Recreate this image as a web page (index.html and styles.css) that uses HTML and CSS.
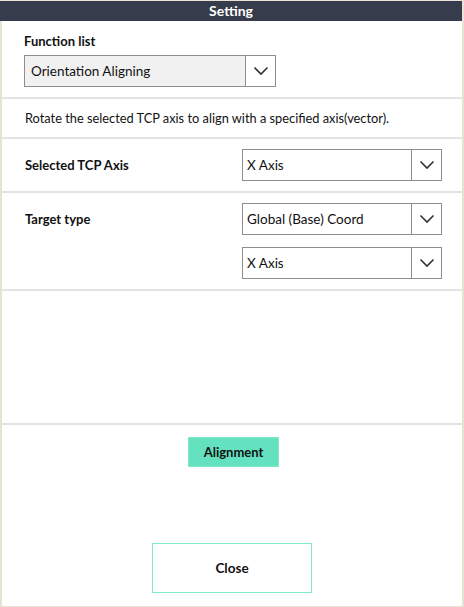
FILE: index.html
```html
<!DOCTYPE html>
<html>
<head>
<meta charset="utf-8">
<link rel="stylesheet" href="styles.css">
</head>
<body>
<div class="panel">
  <div class="header">Setting</div>
  <div class="section s-func">
    <div class="label">Function list</div>
    <div class="select select-gray">
      <span class="select-text">Orientation Aligning</span>
      <span class="select-btn"><svg width="16" height="10" viewBox="0 0 16 10"><polyline points="1.5,1.5 8,8 14.5,1.5" fill="none" stroke="#333" stroke-width="1.6"/></svg></span>
    </div>
  </div>
  <div class="section s-desc">Rotate the selected TCP axis to align with a specified axis(vector).</div>
  <div class="section s-row">
    <div class="label row-label">Selected TCP Axis</div>
    <div class="select select-right">
      <span class="select-text">X Axis</span>
      <span class="select-btn"><svg width="16" height="10" viewBox="0 0 16 10"><polyline points="1.5,1.5 8,8 14.5,1.5" fill="none" stroke="#333" stroke-width="1.6"/></svg></span>
    </div>
  </div>
  <div class="section s-row">
    <div class="label row-label">Target type</div>
    <div class="select-stack">
      <div class="select select-right">
        <span class="select-text">Global (Base) Coord</span>
        <span class="select-btn"><svg width="16" height="10" viewBox="0 0 16 10"><polyline points="1.5,1.5 8,8 14.5,1.5" fill="none" stroke="#333" stroke-width="1.6"/></svg></span>
      </div>
      <div class="select select-right">
        <span class="select-text">X Axis</span>
        <span class="select-btn"><svg width="16" height="10" viewBox="0 0 16 10"><polyline points="1.5,1.5 8,8 14.5,1.5" fill="none" stroke="#333" stroke-width="1.6"/></svg></span>
      </div>
    </div>
  </div>
  <div class="section s-empty"></div>
  <div class="footer">
    <button class="btn-align">Alignment</button>
    <button class="btn-close">Close</button>
  </div>
</div>
</body>
</html>
```
FILE: styles.css
```css
html, body {
  margin: 0;
  padding: 0;
  background: #e7e2d5;
}
body {
  font-family: Lato, "Open Sans", "Liberation Sans", sans-serif;
  color: #111;
  width: 464px;
  height: 607px;
  overflow: hidden;
}
.panel {
  margin: 1px 2px 0 2px;
  background: #fff;
  height: 605px;
  display: flex;
  flex-direction: column;
}
.header {
  height: 20px;
  background: #363c4b;
  color: #fff;
  font-weight: 700;
  font-size: 14px;
  line-height: 20px;
  text-align: center;
  margin-left: -2px;
}
.section {
  border-bottom: 2px solid #e3e3e3;
  box-sizing: border-box;
}
.s-func {
  height: 78px;
  padding: 12px 22px 0 22px;
}
.label {
  font-weight: 700;
  font-size: 13px;
  line-height: 16px;
}
.s-func .label {
  margin-bottom: 6px;
}
.select {
  display: flex;
  height: 32px;
  border: 1px solid #8e8e8e;
  box-sizing: border-box;
  background: #fff;
}
.select-gray {
  width: 252px;
}
.select-gray .select-text {
  background: #f1f1f1;
  padding-left: 6px;
}
.select-text {
  flex: 1;
  font-size: 13.5px;
  line-height: 30px;
  padding-left: 4px;
  white-space: nowrap;
}
.select-btn {
  width: 29px;
  border-left: 1px solid #8e8e8e;
  display: flex;
  align-items: center;
  justify-content: center;
}
.s-desc {
  height: 40px;
  padding: 0 23px;
  font-size: 12.8px;
  line-height: 38px;
  white-space: nowrap;
}
.s-row {
  display: flex;
  justify-content: space-between;
  padding: 10px 20px 10px 23px;
}
.row-label {
  line-height: 32px;
}
.select-right {
  width: 200px;
}
.select-stack {
  display: flex;
  flex-direction: column;
  gap: 12px;
}
.s-empty {
  height: 134px;
}
.footer {
  flex: 1;
  display: flex;
  flex-direction: column;
  align-items: center;
  padding-top: 12px;
}
button {
  font-family: inherit;
  font-weight: 700;
  color: #111;
  cursor: pointer;
}
.btn-align {
  width: 91px;
  height: 30px;
  background: #64e2c0;
  border: 1px solid #7ee9cb;
  font-size: 13px;
  margin-left: 3px;
}
.btn-close {
  margin-top: 76px;
  width: 160px;
  height: 50px;
  background: #fff;
  border: 1.5px solid #86e8cc;
  font-size: 13.5px;
  margin-left: 0;
}
```
